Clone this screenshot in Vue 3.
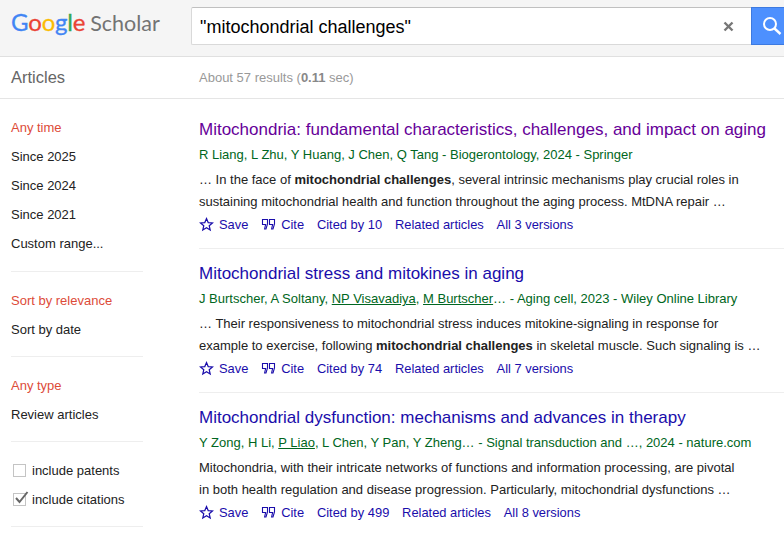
<script setup>
const sideGroups = [
  { items: [
    { label: 'Any time', active: true },
    { label: 'Since 2025' },
    { label: 'Since 2024' },
    { label: 'Since 2021' },
    { label: 'Custom range...' }
  ] },
  { items: [
    { label: 'Sort by relevance', active: true },
    { label: 'Sort by date' }
  ] },
  { items: [
    { label: 'Any type', active: true },
    { label: 'Review articles' }
  ] }
]

const results = [
  {
    title: 'Mitochondria: fundamental characteristics, challenges, and impact on aging',
    visited: true,
    meta: [{ t: 'R Liang, L Zhu, Y Huang, J Chen, Q Tang - Biogerontology, 2024 - Springer' }],
    body: [
      { t: '… In the face of ' },
      { t: 'mitochondrial challenges', b: true },
      { t: ', several intrinsic mechanisms play crucial roles in sustaining mitochondrial health and function throughout the aging process. MtDNA repair …' }
    ],
    cited: 'Cited by 10',
    versions: 'All 3 versions'
  },
  {
    title: 'Mitochondrial stress and mitokines in aging',
    meta: [
      { t: 'J Burtscher, A Soltany, ' },
      { t: 'NP Visavadiya', u: true },
      { t: ', ' },
      { t: 'M Burtscher', u: true },
      { t: '… - Aging cell, 2023 - Wiley Online Library' }
    ],
    body: [
      { t: '… Their responsiveness to mitochondrial stress induces mitokine-signaling in response for example to exercise, following ' },
      { t: 'mitochondrial challenges', b: true },
      { t: ' in skeletal muscle. Such signaling is …' }
    ],
    cited: 'Cited by 74',
    versions: 'All 7 versions'
  },
  {
    title: 'Mitochondrial dysfunction: mechanisms and advances in therapy',
    meta: [
      { t: 'Y Zong, H Li, ' },
      { t: 'P Liao', u: true },
      { t: ', L Chen, Y Pan, Y Zheng… - Signal transduction and …, 2024 - nature.com' }
    ],
    body: [
      { t: 'Mitochondria, with their intricate networks of functions and information processing, are pivotal', line: true },
      { t: 'in both health regulation and disease progression. Particularly, mitochondrial dysfunctions …', line: true }
    ],
    cited: 'Cited by 499',
    versions: 'All 8 versions'
  }
]

const logo = [
  { c: 'G', color: '#4285f4' },
  { c: 'o', color: '#ea4335' },
  { c: 'o', color: '#fbbc05' },
  { c: 'g', color: '#4285f4' },
  { c: 'l', color: '#34a853' },
  { c: 'e', color: '#ea4335' }
]
</script>

<template>
  <div class="page">
    <header class="top">
      <div class="logo">
        <span class="google"><span v-for="(l, i) in logo" :key="i" :style="{ color: l.color }">{{ l.c }}</span></span>
        <span class="scholar">Scholar</span>
      </div>
      <form class="search" @submit.prevent>
        <div class="search-box">
          <span class="query">"mitochondrial challenges"</span>
          <svg class="clear" width="11" height="11" viewBox="0 0 11 11">
            <path d="M1.5 1.5l8 8M9.5 1.5l-8 8" stroke="#777" stroke-width="2.4" fill="none" />
          </svg>
        </div>
        <button class="search-btn" type="button" aria-label="Search">
          <svg width="20" height="20" viewBox="0 0 20 20">
            <circle cx="8" cy="8" r="6" stroke="#fff" stroke-width="2" fill="none" />
            <path d="M12.5 12.5l6 5.5" stroke="#fff" stroke-width="2.4" fill="none" />
          </svg>
        </button>
      </form>
    </header>

    <div class="subhead">
      <div class="subhead-title">Articles</div>
      <div class="stats">About 57 results (<b>0.11</b> sec)</div>
    </div>

    <div class="content">
      <aside class="side">
        <div v-for="(group, g) in sideGroups" :key="g" class="side-group">
          <div
            v-for="item in group.items"
            :key="item.label"
            class="side-item"
            :class="{ active: item.active }"
          >{{ item.label }}</div>
        </div>
        <div class="side-group">
          <label class="side-item check">
            <span class="box"></span>
            include patents
          </label>
          <label class="side-item check">
            <span class="box">
              <svg width="15" height="13" viewBox="0 0 15 13">
                <path d="M2 7l3.5 4L13.5 1" stroke="#666" stroke-width="2" fill="none" />
              </svg>
            </span>
            include citations
          </label>
        </div>
      </aside>

      <main class="results">
        <article v-for="r in results" :key="r.title" class="result">
          <h3 class="title" :class="{ visited: r.visited }">{{ r.title }}</h3>
          <div class="meta">
            <span v-for="(m, i) in r.meta" :key="i" :class="{ author: m.u }">{{ m.t }}</span>
          </div>
          <div class="snippet">
            <span v-for="(s, i) in r.body" :key="i" :class="{ strong: s.b, line: s.line }">{{ s.t }}</span>
          </div>
          <div class="actions">
            <span class="action">
              <svg width="15" height="15" viewBox="0 0 15 15">
                <path d="M7.5 1.6l1.7 4 4.3.35-3.3 2.8 1 4.2-3.7-2.25-3.7 2.25 1-4.2-3.3-2.8 4.3-.35z" stroke="#1a0dab" stroke-width="1.2" fill="none" />
              </svg>
              Save
            </span>
            <span class="action">
              <svg width="15" height="15" viewBox="0 0 15 15">
                <path d="M1.5 2.5h5v4.5L5 12H3.6l1-4.5H1.5zM8.5 2.5h5v4.5L12 12h-1.4l1-4.5H8.5z" stroke="#1a0dab" stroke-width="1.1" fill="none" />
              </svg>
              Cite
            </span>
            <span class="action">{{ r.cited }}</span>
            <span class="action">Related articles</span>
            <span class="action">{{ r.versions }}</span>
          </div>
        </article>
      </main>
    </div>
  </div>
</template>

<style>
html, body {
  overflow: hidden;
  background: #fff;
}
</style>

<style scoped>
.page {
  width: 784px;
  height: 535px;
  overflow: hidden;
  font-family: "Liberation Sans", Arial, sans-serif;
  color: #222;
}

.top {
  display: flex;
  align-items: flex-start;
  height: 57px;
  background: #f5f5f5;
  border-bottom: 1px solid #e0e0e0;
  box-sizing: border-box;
  padding-top: 7px;
}

.logo {
  width: 191px;
  flex: none;
  padding-left: 11px;
  box-sizing: border-box;
  display: flex;
  align-items: baseline;
  gap: 5px;
  height: 30px;
  font-family: Lato, "Open Sans", sans-serif;
  line-height: 30px;
}

.google {
  font-size: 24px;
  letter-spacing: -0.2px;
  -webkit-text-stroke: 0.3px currentColor;
}

.google span {
  -webkit-text-stroke-color: currentColor;
}

.scholar {
  color: #737373;
  font-size: 21.5px;
}

.search {
  display: flex;
  flex: none;
  height: 38px;
}

.search-box {
  width: 560px;
  height: 38px;
  box-sizing: border-box;
  background: #fff;
  border: 1px solid #d9d9d9;
  border-top-color: #c0c0c0;
  border-right: 0;
  border-radius: 2px 0 0 2px;
  display: flex;
  align-items: center;
  justify-content: space-between;
  padding: 2px 17px 0 8px;
}

.clear {
  margin-top: -2px;
}

.query {
  font-size: 18px;
  color: #000;
}

.search-btn {
  width: 39px;
  height: 38px;
  flex: none;
  border: 1px solid #3d7ae0;
  background: #4d90fe;
  padding: 0 0 0 10px;
  display: flex;
  align-items: center;
}

.subhead {
  display: flex;
  align-items: center;
  height: 42px;
  border-bottom: 1px solid #e5e5e5;
  box-sizing: border-box;
}

.subhead-title {
  width: 199px;
  padding-left: 11px;
  box-sizing: border-box;
  font-size: 16.5px;
  color: #666;
}

.stats {
  font-size: 13px;
  color: #999;
}

.stats b {
  color: #888;
}

.content {
  display: flex;
}

.side {
  width: 199px;
  flex: none;
  padding-left: 11px;
  box-sizing: border-box;
  padding-top: 14px;
}

.side-group {
  width: 132px;
  border-bottom: 1px solid #eee;
  padding-bottom: 12px;
  margin-bottom: 14px;
}

.side-group:first-child {
  padding-bottom: 13px;
}

.side-item {
  height: 29px;
  line-height: 29px;
  font-size: 13px;
  color: #222;
  white-space: nowrap;
}

.side-item.active {
  color: #dd4b39;
}

.check {
  display: flex;
  align-items: center;
  gap: 6px;
  padding-left: 2px;
}

.box {
  width: 11px;
  height: 11px;
  border: 1px solid #c4c4c4;
  position: relative;
  flex: none;
}

.box svg {
  position: absolute;
  left: 0;
  top: -3px;
}

.results {
  width: 585px;
  flex: none;
  padding-top: 6px;
}

.result {
  height: 144px;
  box-sizing: border-box;
  padding-top: 14px;
  border-bottom: 1px solid #eee;
}

.result:last-child {
  border-bottom: 0;
}

.title {
  margin: 0;
  font-size: 17px;
  font-weight: 400;
  line-height: 22px;
  color: #1a0dab;
  white-space: nowrap;
}

.title.visited {
  color: #660099;
}

.meta {
  margin-top: 5px;
  font-size: 13px;
  line-height: 17px;
  color: #006621;
  white-space: nowrap;
}

.author {
  text-decoration: underline;
}

.snippet {
  margin-top: 6px;
  width: 570px;
  font-size: 13px;
  line-height: 22px;
  color: #222;
}

.strong {
  font-weight: 700;
}

.line {
  display: block;
}

.actions {
  display: flex;
  align-items: center;
  gap: 12.8px;
  height: 22px;
  font-size: 12.9px;
  color: #1a0dab;
  white-space: nowrap;
}

.action {
  display: flex;
  align-items: center;
  gap: 5px;
}
</style>
